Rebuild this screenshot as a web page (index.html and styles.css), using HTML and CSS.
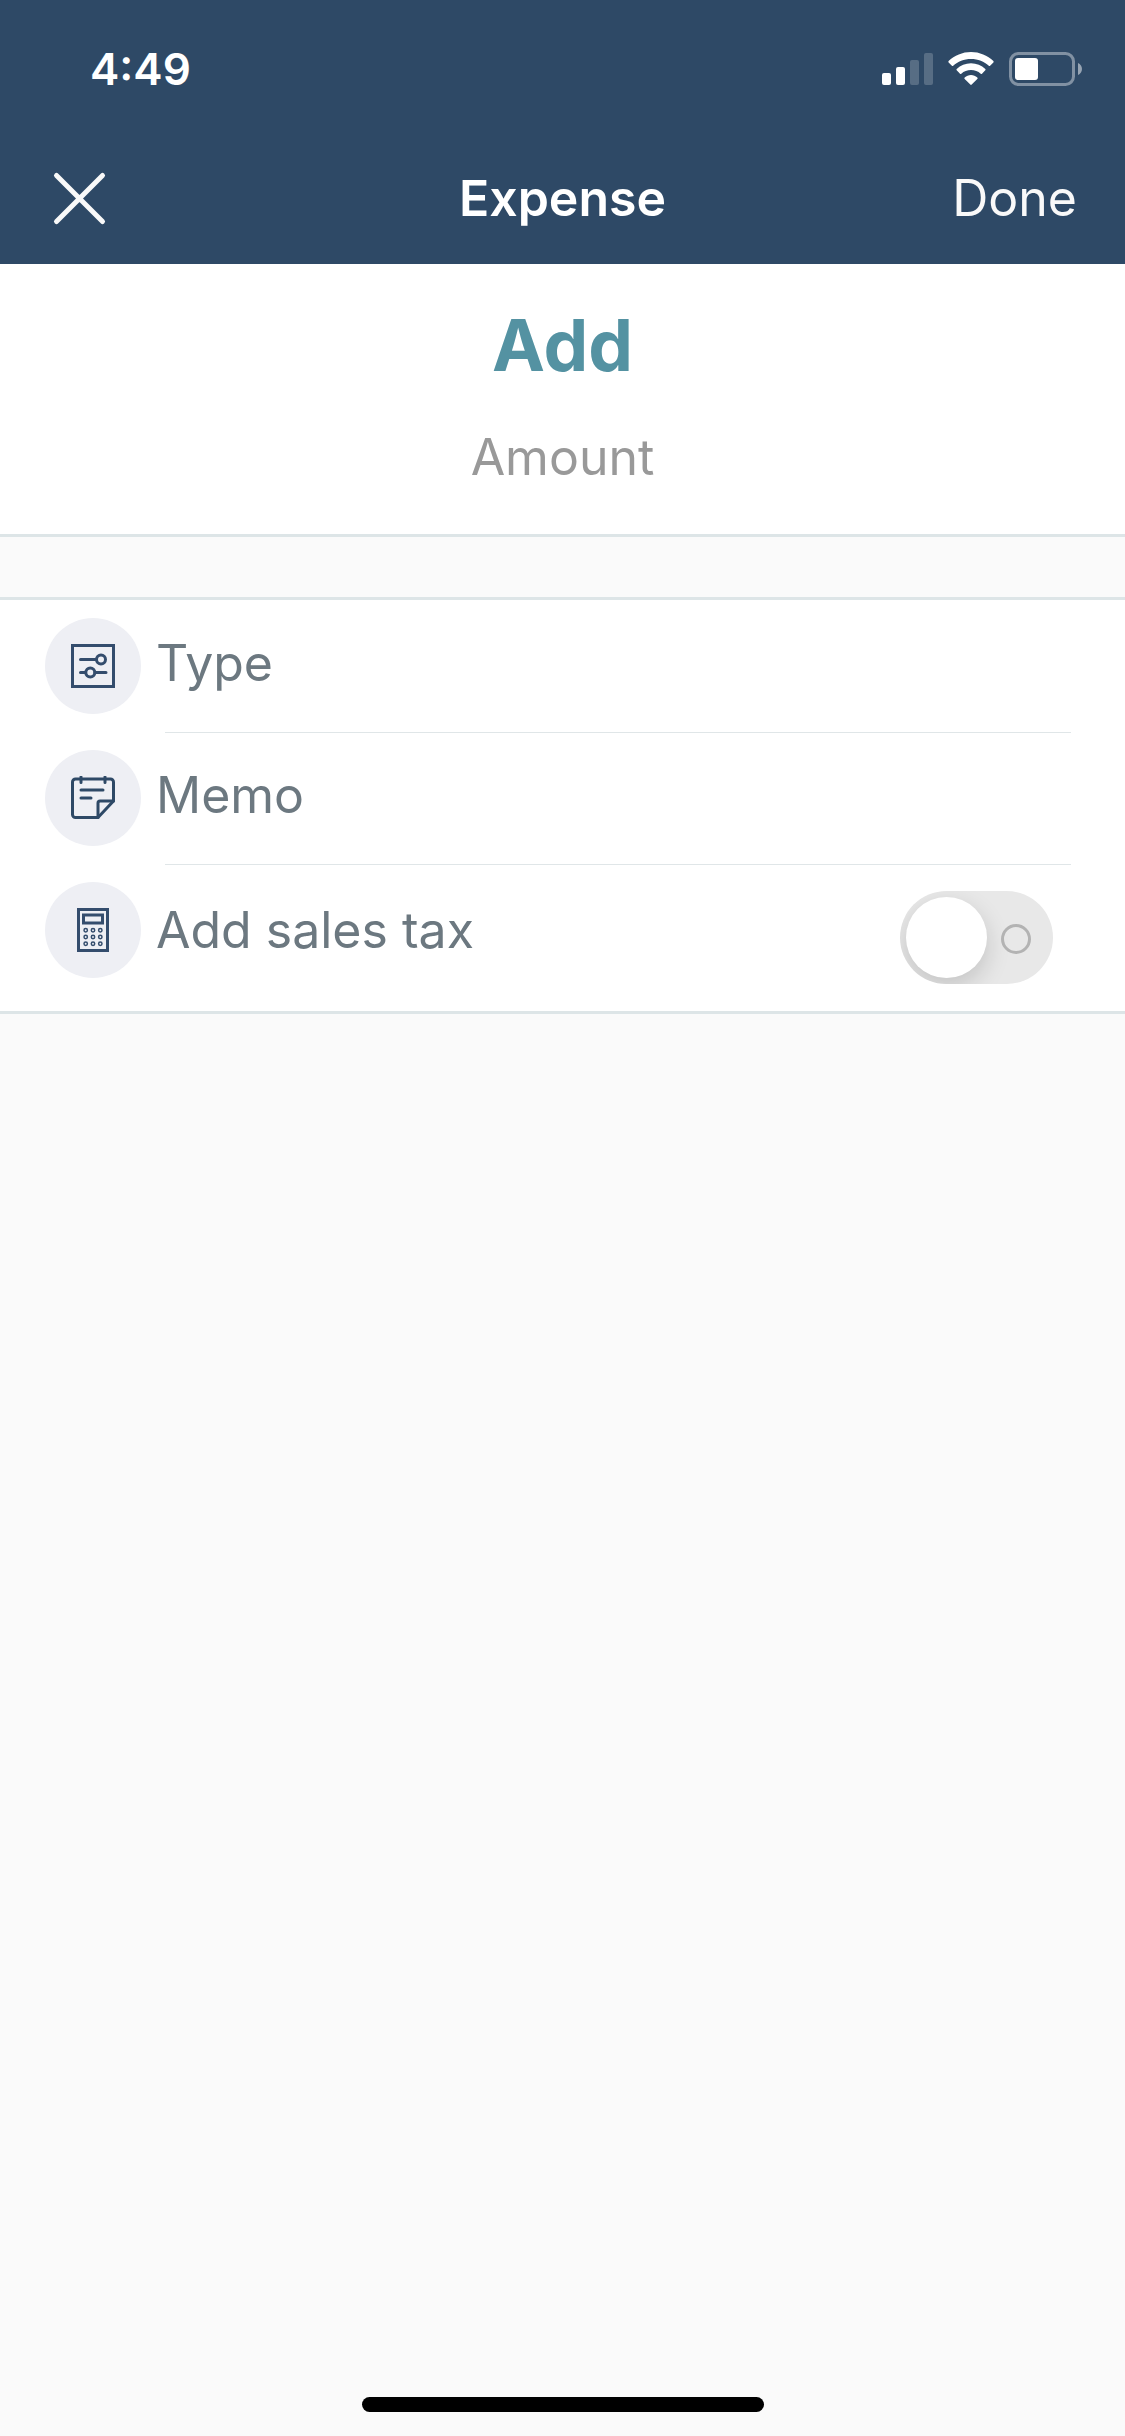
FILE: index.html
```html
<!DOCTYPE html>
<html lang="en">
<head>
    <meta charset="UTF-8">
    <meta name="viewport" content="width=device-width, initial-scale=1.0">
    <title>Expense</title>
    <link rel="stylesheet" href="styles.css">
</head>
<body>

<header class="header">
    <div class="status-bar">
        <span class="time">4:49</span>
        <div class="status-icons">
            <svg width="51" height="34" viewBox="0 0 51 34" fill="#fff">
                <rect x="0" y="21" width="9" height="12" rx="2"/>
                <rect x="14" y="15" width="9" height="18" rx="2"/>
                <rect x="28" y="8" width="9" height="25" rx="2" opacity="0.2"/>
                <rect x="42" y="1" width="9" height="32" rx="2" opacity="0.2"/>
            </svg>
            <svg width="46" height="34" viewBox="0 0 46 34" fill="#fff">
                <path d="M23 0C14.500 0 6.500 3.400.6 9.100a1 1 0 0 0 0 1.300l3.300 3.400a1 1 0 0 0 1.300 0C9.800 9.400 16 7 23 7s13.200 2.400 17.800 6.800a1 1 0 0 0 1.300 0l3.300-3.400a1 1 0 0 0 0-1.300C39.500 3.400 31.500 0 23 0z"/>
                <path d="M23 11.300c-5.500 0-10.500 2.100-14.300 5.600a1 1 0 0 0 0 1.400l3.300 3.400a1 1 0 0 0 1.300 0c2.600-2.400 6-3.700 9.700-3.700s7.100 1.300 9.700 3.700a1 1 0 0 0 1.300 0l3.300-3.400a1 1 0 0 0 0-1.400c-3.800-3.500-8.800-5.600-14.300-5.600z"/>
                <path d="M23 23c-2.400 0-4.600.9-6.300 2.400a1 1 0 0 0 0 1.500l5.600 5.700a1 1 0 0 0 1.400 0l5.600-5.700a1 1 0 0 0 0-1.500C27.600 23.900 25.400 23 23 23z"/>
            </svg>
            <svg width="73" height="34" viewBox="0 0 73 34" fill="#fff">
                <rect x="1.500" y="1.500" width="63" height="31" rx="8" fill="none" stroke="#fff" stroke-width="3" opacity="0.4"/>
                <rect x="6" y="6" width="23" height="22" rx="3"/>
                <path d="M69 11c2.500 1 4 3.500 4 6s-1.500 5-4 6z" opacity="0.5"/>
            </svg>
        </div>
    </div>
    <nav class="nav">
        <button class="nav-button close" aria-label="Close">
            <svg width="63" height="63" viewBox="-6 -6 63 63" fill="none" stroke="#f9f9f9" stroke-width="5" stroke-linecap="round">
                <path d="M2.500 2.500l46 46M48.500 2.500l-46 46"/>
            </svg>
        </button>
        <h1>Expense</h1>
        <button class="nav-button done">Done</button>
    </nav>
</header>

<main>
    <section class="amount">
        <button class="amount-value" aria-describedby="amountLabel">Add</button>
        <span class="amount-label" id="amountLabel">Amount</span>
    </section>

    <section class="fields">
        <button class="row">
            <span class="icon">
                <svg width="44" height="44" viewBox="0 0 44 44" fill="none" stroke="#344d6d" stroke-width="3" stroke-linecap="round">
                    <rect x="1.500" y="1.500" width="41" height="41"/>
                    <path d="M9.500 15.500H25M9.500 28.500H14.500M24 28.500H35"/>
                    <circle cx="30" cy="15.500" r="4.500"/>
                    <circle cx="19.300" cy="28.500" r="4.500"/>
                </svg>
            </span>
            <span class="label">Type</span>
        </button>
        <button class="row">
            <span class="icon">
                <svg width="44" height="44" viewBox="0 0 44 44" fill="none" stroke="#2e4966" stroke-width="3" stroke-linecap="round" stroke-linejoin="round">
                    <path d="M27 41.500H4.500a3 3 0 0 1-3-3V6a3 3 0 0 1 3-3h35a3 3 0 0 1 3 3V25z"/>
                    <path d="M27 41.500V27a2 2 0 0 1 2-2h13.500"/>
                    <path d="M10 1V6.500M34 1V6.500M10 14H32M10 22H20"/>
                </svg>
            </span>
            <span class="label">Memo</span>
        </button>
        <div class="row row-switch">
            <span class="icon">
                <svg width="44" height="44" viewBox="0 0 44 44" fill="none" stroke="#344d6d" stroke-width="3">
                    <rect x="7.500" y="1.500" width="29" height="41"/>
                    <rect x="12.500" y="7" width="19" height="8"/>
                    <g stroke-width="1.500">
                        <circle cx="14.700" cy="22.300" r="1.700"/>
                        <circle cx="22" cy="22.300" r="1.700"/>
                        <circle cx="29.300" cy="22.300" r="1.700"/>
                        <circle cx="14.700" cy="29" r="1.700"/>
                        <circle cx="22" cy="29" r="1.700"/>
                        <circle cx="29.300" cy="29" r="1.700"/>
                        <circle cx="14.700" cy="35.700" r="1.700"/>
                        <circle cx="22" cy="35.700" r="1.700"/>
                        <circle cx="29.300" cy="35.700" r="1.700"/>
                    </g>
                </svg>
            </span>
            <label class="label" for="salesTax">Add sales tax</label>
            <input class="switch" type="checkbox" role="switch" id="salesTax">
        </div>
    </section>
</main>

<footer class="home">
    <div class="home-indicator"></div>
</footer>

</body>
</html>
```

FILE: styles.css
```css
*, *::before, *::after {
    box-sizing: border-box;
}
body {
    margin: 0;
    min-height: 100vh;
    display: flex;
    flex-direction: column;
    font-family: Inter, "Liberation Sans", sans-serif;
    font-size: 50px;
    line-height: 60px;
    background-color: #fafafa;
}
button {
    font: inherit;
    padding: 0;
    border: none;
    background: none;
    cursor: pointer;
}
svg {
    display: block;
}
.header {
    background-color: #2e4966;
    color: #fff;
}
.status-bar {
    display: flex;
    align-items: center;
    justify-content: space-between;
    height: 132px;
    padding: 6px 43px 0 90px;
}
.time {
    font-size: 44px;
    font-weight: 600;
}
.status-icons {
    display: flex;
    gap: 15px;
}
.nav {
    display: grid;
    grid-template-columns: 1fr auto 1fr;
    align-items: center;
    height: 132px;
    padding: 0 48px;
}
.nav h1 {
    margin: 0;
    font-size: 50px;
    font-weight: 600;
}
.nav-button {
    color: #f9f9f9;
}
.close {
    justify-self: start;
}
.done {
    justify-self: end;
}
.amount {
    display: flex;
    flex-direction: column;
    align-items: center;
    gap: 40px;
    padding: 39px 0 47px;
    background-color: #fff;
    border-bottom: 3px solid #dde5e7;
}
.amount-value {
    font-size: 71px;
    font-weight: 700;
    line-height: 84px;
    color: #5492a2;
}
.amount-label {
    color: #999;
}
.fields {
    margin-top: 60px;
    background-color: #fff;
    border-top: 3px solid #dde5e7;
    border-bottom: 3px solid #dde5e7;
}
.row {
    display: flex;
    align-items: flex-start;
    gap: 15px;
    width: 100%;
    height: 132px;
    padding: 18px 72px 0 45px;
    color: #6c7880;
    text-align: left;
}
/* thin divider that starts under the label */
.row + .row {
    background: linear-gradient(#e0e6e8, #e0e6e8) no-repeat 165px 0 / calc(100% - 219px) 1px;
}
.icon {
    display: flex;
    align-items: center;
    justify-content: center;
    flex: none;
    width: 96px;
    height: 96px;
    border-radius: 50%;
    background-color: #eeeff4;
}
.label {
    flex: 1;
    padding-top: 15px;
}
.row-switch {
    height: 147px;
}
.row-switch .label {
    padding-top: 18px;
}
.switch {
    appearance: none;
    display: flex;
    align-items: center;
    justify-content: space-between;
    width: 153px;
    height: 93px;
    margin: 9px 0 0;
    padding: 0 22px 0 6px;
    border-radius: 47px;
    background-color: #e8e8e8;
    overflow: hidden;
    cursor: pointer;
}
.switch::before {
    content: "";
    width: 81px;
    height: 81px;
    border-radius: 50%;
    background-color: #fff;
    box-shadow: 0 9px 24px rgba(0, 0, 0, 0.16);
}
.switch::after {
    content: "";
    width: 30px;
    height: 30px;
    margin-top: 3px;
    border: 3px solid #b3b3b3;
    border-radius: 50%;
}
.switch:checked {
    flex-direction: row-reverse;
    padding: 0 6px 0 22px;
    background-color: #5492a2;
}
.home {
    display: flex;
    justify-content: center;
    margin-top: auto;
    padding-bottom: 24px;
}
.home-indicator {
    width: 402px;
    height: 15px;
    border-radius: 8px;
    background-color: #000;
}
```
